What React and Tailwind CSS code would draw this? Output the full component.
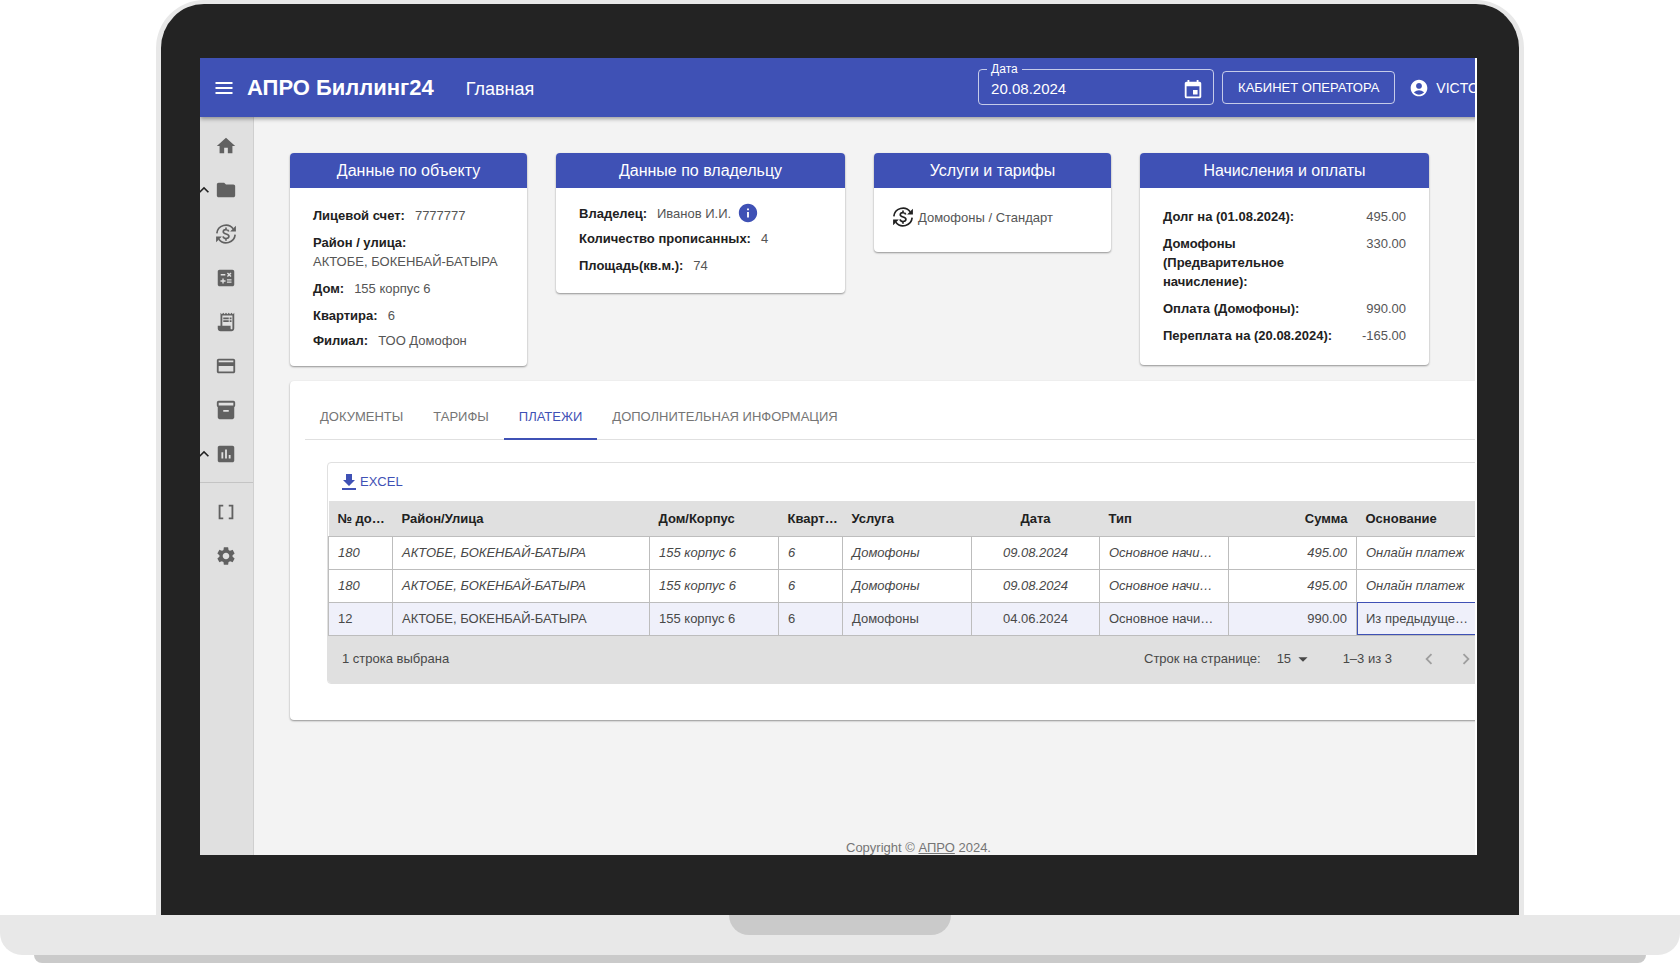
import React, { useState } from 'react';
import {
  MdHome,
  MdFolder,
  MdCalculate,
  MdReceiptLong,
  MdCreditCard,
  MdInventory2,
  MdInsertChart,
  MdDataArray,
  MdSettings,
  MdExpandLess,
  MdEvent,
  MdAccountCircle,
  MdInfo,
  MdChevronLeft,
  MdChevronRight,
  MdArrowDropDown,
} from 'react-icons/md';
import clsx from 'clsx';

// Dollar sign inside two circular arrows
const TariffIcon = ({ className }) => (
  <svg viewBox="0 0 24 24" className={className} fill="none" stroke="currentColor" strokeWidth="1.8">
    <path d="M2 11.300A10 10 0 0 1 19.800 6.200M22 12.700A10 10 0 0 1 4.200 17.800" />
    <path d="M15 9.300c-.3-1.300-1.400-2.100-3-2.100-1.800 0-3 .9-3 2.300 0 3.300 6.200 1.700 6.200 5 0 1.500-1.300 2.400-3.200 2.400-1.800 0-3-.8-3.200-2.300M12 4.800v2.400M12 16.900v2.400" />
    <path d="M22.800 3v6.300h-6.300zM1.200 21v-6.300h6.300z" fill="currentColor" stroke="none" />
  </svg>
);

const menuItems = [
  { label: 'Главная', icon: MdHome },
  { label: 'Справочники', icon: MdFolder, expandable: true },
  { label: 'Тарифы', icon: TariffIcon },
  { label: 'Начисления', icon: MdCalculate },
  { label: 'Квитанции', icon: MdReceiptLong },
  { label: 'Платежи', icon: MdCreditCard },
  { label: 'Архив', icon: MdInventory2 },
  { label: 'Отчеты', icon: MdInsertChart, expandable: true },
];

const serviceItems = [
  { label: 'Переменные', icon: MdDataArray },
  { label: 'Настройки', icon: MdSettings },
];

const tabs = ['Документы', 'Тарифы', 'Платежи', 'Дополнительная информация'];

const columns = [
  { key: 'number', title: '№ документа', width: 'w-[64px]' },
  { key: 'street', title: 'Район/Улица', width: 'w-[257px]' },
  { key: 'house', title: 'Дом/Корпус', width: 'w-[129px]' },
  { key: 'flat', title: 'Квартира', width: 'w-[64px]' },
  { key: 'service', title: 'Услуга', width: 'w-[129px]' },
  { key: 'date', title: 'Дата', width: 'w-[128px]', align: 'text-center' },
  { key: 'type', title: 'Тип', width: 'w-[129px]' },
  { key: 'sum', title: 'Сумма', width: 'w-[128px]', align: 'text-right' },
  { key: 'reason', title: 'Основание', width: 'w-[129px]' },
];

const payments = [
  {
    id: 1,
    number: '180',
    street: 'АКТОБЕ, БОКЕНБАЙ-БАТЫРА',
    house: '155 корпус 6',
    flat: '6',
    service: 'Домофоны',
    date: '09.08.2024',
    type: 'Основное начисление',
    sum: '495.00',
    reason: 'Онлайн платеж',
  },
  {
    id: 2,
    number: '180',
    street: 'АКТОБЕ, БОКЕНБАЙ-БАТЫРА',
    house: '155 корпус 6',
    flat: '6',
    service: 'Домофоны',
    date: '09.08.2024',
    type: 'Основное начисление',
    sum: '495.00',
    reason: 'Онлайн платеж',
  },
  {
    id: 3,
    number: '12',
    street: 'АКТОБЕ, БОКЕНБАЙ-БАТЫРА',
    house: '155 корпус 6',
    flat: '6',
    service: 'Домофоны',
    date: '04.06.2024',
    type: 'Основное начисление',
    sum: '990.00',
    reason: 'Из предыдущей программы',
  },
];

const SidebarItem = ({ label, icon: Icon, expandable }) => (
  <button type="button" aria-label={label} className="flex h-11 w-full items-center text-[#616161]">
    <span className="-ml-[6px] w-[21px] shrink-0 text-[#212121]">
      {expandable && <MdExpandLess className="size-5" />}
    </span>
    <Icon className="size-[22px] shrink-0" />
  </button>
);

const Header = () => (
  <header className="relative z-10 flex h-[59px] shrink-0 items-center bg-[#3f51b5] pr-[94px] pl-[13px] text-white shadow-[0_2px_4px_rgba(0,0,0,0.35)]">
    <button type="button" aria-label="Меню">
      <svg viewBox="0 0 22 22" className="size-[22px]" stroke="currentColor" strokeWidth="2">
        <path d="M2.500 6h17M2.500 11h17M2.500 16h17" />
      </svg>
    </button>
    <span className="ml-3 text-[22px] font-bold">АПРО Биллинг24</span>
    <a href="#main" className="ml-8 pt-[2px] text-lg">
      Главная
    </a>

    <div className="ml-auto flex items-center gap-2">
      <fieldset className="-mt-[7px] flex h-[42px] w-[236px] items-center rounded border border-white/70 px-3">
        <legend className="-ml-1 h-3 px-1 text-xs leading-3">
          <label htmlFor="date">Дата</label>
        </legend>
        <div className="flex h-[25px] w-full items-center justify-between">
          <input id="date" type="text" defaultValue="20.08.2024" className="w-32 text-[15px] outline-none" />
          <button type="button" aria-label="Выбрать дату" className="-mr-[3px]">
            <MdEvent className="size-[22px]" />
          </button>
        </div>
      </fieldset>
      <button type="button" className="h-[33px] rounded border border-white/70 px-[15px] text-[13px] uppercase">
        Кабинет оператора
      </button>
      <button type="button" className="flex items-center gap-[7px] pl-[6px] text-sm uppercase">
        <MdAccountCircle className="size-5" />
        Victor
      </button>
    </div>
  </header>
);

const Card = ({ title, children }) => (
  <section className="overflow-hidden rounded bg-white shadow-[0_1px_2px_rgba(0,0,0,0.4)]">
    <h2 className="bg-[#3f51b5] text-center text-base leading-[35px] text-white">{title}</h2>
    {children}
  </section>
);

const Field = ({ label, children }) => (
  <div className="flex flex-wrap items-center gap-x-[10px]">
    <dt className="font-bold text-[#212121]">{label}</dt>
    <dd>{children}</dd>
  </div>
);

const Amount = ({ label, children }) => (
  <div className="flex justify-between gap-4">
    <dt className="font-bold text-[#212121]">{label}</dt>
    <dd>{children}</dd>
  </div>
);

const PaymentsTable = () => (
  <div className="mt-[22px] ml-[22px] overflow-hidden rounded border border-[#e0e0e0] text-[13px]">
    <div className="flex h-[38px] items-center pl-[14px]">
      <button type="button" className="flex items-center gap-1 text-[13px] text-[#3f51b5] uppercase">
        <svg viewBox="0 0 14 16" className="h-4 w-[14px]" fill="currentColor">
          <path d="M0 16h14v-2H0zM13 6h-3V0H4v6H1l6 6z" />
        </svg>
        Excel
      </button>
    </div>
    <table className="w-full table-fixed border-collapse text-left">
      <thead className="bg-[#e0e0e0] text-[#212121]">
        <tr className="h-[35px]">
          {columns.map((col) => (
            <th
              key={col.key}
              className={clsx('truncate pl-[9px] font-bold', col.width, col.align, col.align ? 'pr-[9px]' : 'pr-1')}
            >
              {col.title}
            </th>
          ))}
          <th aria-hidden="true" />
        </tr>
      </thead>
      <tbody>
        {payments.map((row, rowIndex) => {
          const selected = rowIndex === payments.length - 1;
          return (
            <tr
              key={row.id}
              className={clsx('h-[33px] text-[#484848]', selected ? 'bg-[#eff0fa]' : 'italic')}
            >
              {columns.map((col) => (
                <td
                  key={col.key}
                  className={clsx(
                    'truncate border border-[#bdbdbd] pl-[9px]',
                    col.align,
                    col.align ? 'pr-[9px]' : 'pr-[14px]',
                    selected && col.key === 'reason' && 'outline-1 -outline-offset-1 outline-[#3f51b5]'
                  )}
                >
                  {row[col.key]}
                </td>
              ))}
              <td className="border-y border-[#bdbdbd]" />
            </tr>
          );
        })}
      </tbody>
    </table>
    <div className="flex h-[47px] items-center bg-[#e0e0e0] pr-[54px] pl-[14px] text-[#484848]">
      <span>1 строка выбрана</span>
      <label htmlFor="page-size" className="ml-auto">
        Строк на странице:
      </label>
      <div className="ml-4 flex items-center">
        <select id="page-size" defaultValue="15" className="w-[18px] appearance-none">
          <option>15</option>
          <option>30</option>
        </select>
        <MdArrowDropDown className="-ml-[3px] size-[22px]" />
      </div>
      <span className="ml-[29px]">1–3 из 3</span>
      <button type="button" aria-label="Назад" className="ml-[26px] text-[#9e9e9e]">
        <MdChevronLeft className="size-[22px]" />
      </button>
      <button type="button" aria-label="Вперед" className="ml-[15px] text-[#9e9e9e]">
        <MdChevronRight className="size-[22px]" />
      </button>
    </div>
  </div>
);

const Billing = () => {
  const [activeTab, setActiveTab] = useState('Платежи');

  return (
    <div className="flex h-full w-[calc(100%+108px)] flex-col bg-[#f3f3f3]">
      <Header />
      <div className="flex min-h-0 flex-1">
        <nav className="w-[54px] shrink-0 overflow-hidden border-r border-[#cfcfcf] bg-[#e0e0e0] pt-[7px]">
          {menuItems.map((item) => (
            <SidebarItem key={item.label} {...item} />
          ))}
          <hr className="mt-[6px] mb-[7px] border-[#c4c4c4]" />
          {serviceItems.map((item) => (
            <SidebarItem key={item.label} {...item} />
          ))}
        </nav>

        <main id="main" className="flex min-w-0 flex-1 flex-col px-9 pt-9">
          <div className="grid grid-cols-[237fr_289fr_237fr_289fr] items-start gap-[29px] pr-[118px] text-[13px] leading-[19px] text-[#555]">
            <Card title="Данные по объекту">
              <dl className="px-[23px] pt-[18px] pb-4">
                <div className="mb-[6px] space-y-2">
                  <Field label="Лицевой счет:">7777777</Field>
                  <Field label="Район / улица:">АКТОБЕ, БОКЕНБАЙ-БАТЫРА</Field>
                  <Field label="Дом:">155 корпус 6</Field>
                  <Field label="Квартира:">6</Field>
                </div>
                <Field label="Филиал:">ТОО Домофон</Field>
              </dl>
            </Card>
            <Card title="Данные по владельцу">
              <dl className="px-[23px] pt-[14px] pb-[18px]">
                <Field label="Владелец:">
                  <span className="flex items-center gap-[6px]">
                    Иванов И.И. <MdInfo className="size-[22px] text-[#3f51b5]" />
                  </span>
                </Field>
                <div className="mt-[5px] space-y-2">
                  <Field label="Количество прописанных:">4</Field>
                  <Field label="Площадь(кв.м.):">74</Field>
                </div>
              </dl>
            </Card>
            <Card title="Услуги и тарифы">
              <p className="flex items-center gap-1 px-[18px] pt-[18px] pb-6">
                <TariffIcon className="size-[22px] text-[#212121]" />
                Домофоны / Стандарт
              </p>
            </Card>
            <Card title="Начисления и оплаты">
              <dl className="space-y-2 px-[23px] pt-[19px] pb-5">
                <Amount label="Долг на (01.08.2024):">495.00</Amount>
                <Amount label="Домофоны (Предварительное начисление):">330.00</Amount>
                <Amount label="Оплата (Домофоны):">990.00</Amount>
                <Amount label="Переплата на (20.08.2024):">-165.00</Amount>
              </dl>
            </Card>
          </div>

          <section className="mt-[15px] rounded bg-white px-[15px] pt-3 pb-9 shadow-[0_1px_2px_rgba(0,0,0,0.4)]">
            <div role="tablist" className="flex h-[47px] border-b border-[#e0e0e0]">
              {tabs.map((tab) => (
                <button
                  key={tab}
                  type="button"
                  role="tab"
                  aria-selected={tab === activeTab}
                  onClick={() => setActiveTab(tab)}
                  className={clsx(
                    '-mb-px border-b-2 px-[15px] pt-[2px] text-[13px] uppercase',
                    tab === activeTab ? 'border-[#3f51b5] text-[#3f51b5]' : 'border-transparent text-[#757575]'
                  )}
                >
                  {tab}
                </button>
              ))}
            </div>
            <PaymentsTable />
          </section>

          <footer className="mt-auto text-center text-[13px] leading-[14px] text-[#757575]">
            Copyright ©{' '}
            <a href="#main" className="underline">
              АПРО
            </a>{' '}
            2024.
          </footer>
        </main>
      </div>
    </div>
  );
};

const App = () => (
  <div className="flex h-screen flex-col overflow-hidden bg-white font-['Liberation_Sans',Arial,sans-serif]">
    <div className="mx-39 min-h-0 flex-1 rounded-t-[48px] border-x-[5px] border-t-4 border-[#e8e8e8] bg-[#232323] pt-[54px] pr-[42px] pb-15 pl-[39px]">
      <div className="h-full overflow-hidden bg-white pr-[2px]">
        <div className="h-full overflow-hidden">
          <Billing />
        </div>
      </div>
    </div>

    {/* Laptop base */}
    <div className="flex h-10 shrink-0 justify-center rounded-b-[22px] bg-[#e8e8e8]">
      <div className="h-5 w-[222px] rounded-b-[20px] bg-[#cacaca]" />
    </div>
    <div className="mx-[34px] h-2 shrink-0 rounded-b-lg bg-[#cacaca]" />
  </div>
);

export default App;
